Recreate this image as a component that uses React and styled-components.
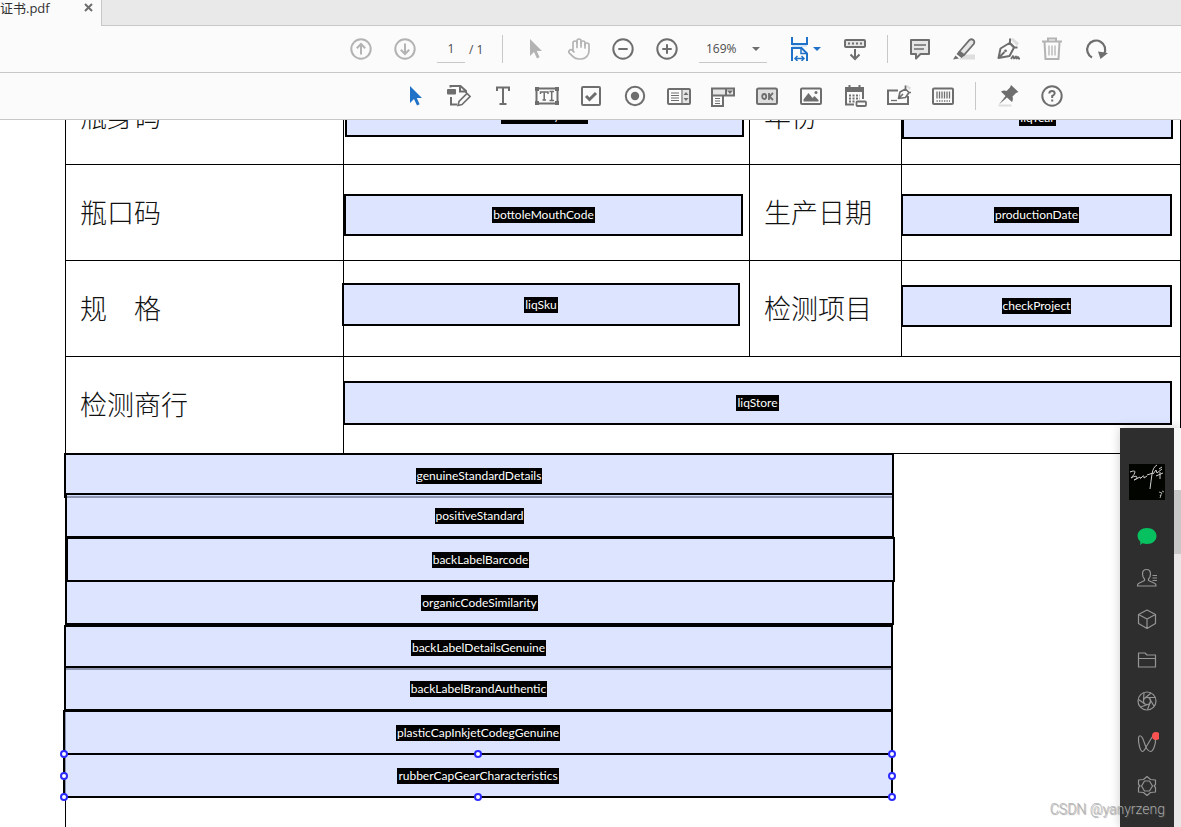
import React from 'react';
import styled, { createGlobalStyle, css } from 'styled-components';
import { Hand } from 'lucide-react';

const GlobalStyle = createGlobalStyle`
  * {
    box-sizing: border-box;
  }

  body {
    margin: 0;
    background: #fff;
    font-family: 'Open Sans', 'Noto Sans CJK SC', sans-serif;
  }

  button, input, select {
    margin: 0;
    padding: 0;
    border: 0;
    background: none;
    color: inherit;
    font: inherit;
  }
`;

const AppWindow = styled.div`
  display: flex;
  flex-direction: column;
  height: 100vh;
  overflow: hidden;
  position: relative;
`;

const TabBar = styled.div`
  display: flex;
  flex: none;
  height: 26px;
  background: #e9e9e9;
`;

const Tab = styled.div`
  display: flex;
  justify-content: space-between;
  width: 102px;
  padding-right: 8px;
  background: #fbfbfb;
  border-right: 1px solid #c8c8c8;
  color: #323232;
  font-size: 13px;
  line-height: 17px;
`;

const TabFiller = styled.div`
  flex: 1;
  border-bottom: 1px solid #c8c8c8;
`;

const CloseButton = styled.button`
  display: flex;
  align-items: center;
  height: 15px;
  color: #6e6e6e;
`;

const Toolbar = styled.div`
  display: flex;
  flex: none;
  align-items: center;
  height: 47px;
  padding-left: ${({ indent }) => indent}px;
  background: #fbfbfb;
  border-bottom: 1px solid #c8c8c8;
  color: #6e6e6e;
`;

const ToolButton = styled.button`
  display: flex;
  flex: none;
  align-items: center;
  justify-content: center;
  width: ${({ wide }) => (wide ? 56 : 44)}px;
  height: 44px;
  color: ${({ tone }) => ({ muted: '#b3b3b3', active: '#1f72c8' }[tone] || '#6e6e6e')};
`;

const Divider = styled.span`
  flex: none;
  width: 1px;
  height: 28px;
  margin: 0 10px;
  background: #c8c8c8;
`;

const PageInput = styled.input`
  width: 28px;
  height: 28px;
  margin: 0 4px 0 10px;
  border-bottom: 1px solid #c8c8c8;
  color: #4b4b4b;
  font-size: 12px;
  text-align: center;
`;

const PageCount = styled.span`
  width: 23px;
  color: #4b4b4b;
  font-size: 12px;
`;

const ZoomBox = styled.label`
  display: flex;
  align-items: center;
  width: 68px;
  height: 28px;
  margin: 0 10px;
  padding: 0 7px;
  border-bottom: 1px solid #c8c8c8;
`;

const ZoomSelect = styled.select`
  flex: 1;
  width: 40px;
  appearance: none;
  color: #4b4b4b;
  font-size: 12px;
`;

const Viewport = styled.main`
  flex: 1;
  min-height: 0;
  overflow: hidden;
`;

/* the page is scrolled, so its first row is cut by the toolbar */
const Page = styled.div`
  position: relative;
  margin-top: -51px;
  padding-left: 65px;
`;

const FormTable = styled.table`
  width: 100%;
  border-spacing: 0;
  border-right: 1px solid #000;
  table-layout: fixed;
`;

const Cell = styled.td`
  height: 96px;
  padding: 0;
  border-left: 1px solid #000;
  border-bottom: 1px solid #000;
`;

const Label = styled.th`
  height: ${({ tall }) => (tall ? 97 : 96)}px;
  padding: 0 14px 2px;
  border-left: 1px solid #000;
  border-bottom: 1px solid #000;
  color: #111;
  font-family: 'Noto Sans CJK SC', sans-serif;
  font-size: 27px;
  font-weight: 300;
  line-height: 40px;
  text-align: left;
  white-space: pre;
`;

const DetailsCell = styled.td`
  height: 420px;
  border-left: 1px solid #000;
`;

const FormField = styled.button`
  position: absolute;
  left: ${({ x }) => x}px;
  top: ${({ y }) => y}px;
  display: flex;
  align-items: center;
  justify-content: center;
  width: ${({ w }) => w}px;
  height: ${({ h }) => h}px;
  background: rgba(204, 216, 255, .69);
  border: 2px solid #000;
`;

const FieldName = styled.span`
  padding: 0 1px;
  background: #000;
  color: #fff;
  font-family: Lato, sans-serif;
  font-size: 12px;
  line-height: 16px;
`;

const handlePlaces = {
  start: '0%',
  middle: '50%',
  end: '100%',
};

const Selection = styled.span`
  position: absolute;
  inset: -1px;
`;

const Handle = styled.span`
  position: absolute;
  left: ${({ h }) => handlePlaces[h]};
  top: ${({ v }) => handlePlaces[v]};
  width: 8px;
  height: 8px;
  margin: -4px;
  background: #fff;
  border: 2px solid #2b2bff;
  border-radius: 50%;
`;

const Dock = styled.aside`
  position: absolute;
  top: 428px;
  right: 0;
  bottom: 0;
  display: flex;
  box-shadow: 0 0 10px rgba(0, 0, 0, .2);
`;

const DockMenu = styled.nav`
  display: flex;
  flex-direction: column;
  align-items: center;
  width: 54px;
  padding-top: 36px;
  background: #2e2e2e;
`;

const Avatar = styled.svg`
  flex: none;
  width: 36px;
  height: 36px;
  margin-bottom: 16px;
  background: #020400;
`;

const DockButton = styled.button`
  display: flex;
  flex: none;
  align-items: center;
  justify-content: center;
  width: 54px;
  height: ${({ tall }) => (tall ? 43 : 41)}px;
  color: #959595;
`;

const ScrollTrack = styled.div`
  width: 7px;
  padding-top: 62px;
  background: linear-gradient(#f8f8f8 62px, #e9e7e7 62px);
`;

const ScrollThumb = styled.div`
  height: 64px;
  background: #c8c8c8;
`;

const Watermark = styled.span`
  position: absolute;
  right: 16px;
  bottom: 8px;
  color: rgba(176, 176, 176, .95);
  font-family: Roboto, sans-serif;
  font-size: 14px;
  font-weight: 300;
  line-height: 20px;
  text-shadow: 1px 1px 1px rgba(90, 90, 90, .6);
`;

const iconBase = css`
  flex: none;
  fill: none;
  stroke: currentColor;
  stroke-width: 2;
`;

const Svg = styled.svg`
  ${iconBase}
`;

const ThinSvg = styled.svg`
  ${iconBase}
  stroke-width: 1.2;
  stroke-linejoin: round;
`;

const Icon = ({ children }) => (
  <Svg width="24" height="24" viewBox="0 0 24 24" aria-hidden="true">{children}</Svg>
);

const DockIcon = ({ children }) => (
  <ThinSvg width="24" height="24" viewBox="0 0 24 24" aria-hidden="true">{children}</ThinSvg>
);

const Caret = () => (
  <Svg width="8" height="4" viewBox="0 0 8 4" aria-hidden="true">
    <path d="M0 0h8L4 4z" fill="currentColor" stroke="none" />
  </Svg>
);

const PointerIcon = () => (
  <Icon><path d="M7 2v17l4-4 3 6.5 2.6-1.2-2.8-6.3H19z" fill="currentColor" stroke="none" /></Icon>
);

const mainTools = {
  up: <Icon><circle cx="12" cy="12" r="9.7" /><path d="M12 17.5V7.5M7.8 11.2 12 7l4.2 4.2" /></Icon>,
  down: <Icon><circle cx="12" cy="12" r="9.7" /><path d="M12 6.5v10M7.8 12.8 12 17l4.2-4.2" /></Icon>,
  minus: <Icon><circle cx="12" cy="12" r="9.7" /><path d="M7.3 12h9.4" /></Icon>,
  plus: <Icon><circle cx="12" cy="12" r="9.7" /><path d="M7.3 12h9.4M12 7.3v9.4" /></Icon>,
  fit: (
    <Icon>
      <path d="M3 8h15v2H3z" fill="#d3e5f6" stroke="none" />
      <path d="M3 0v7h15V0M3 24V11h9.500l5.500 5.500V24" />
      <path d="M12 11v5.500h6M6 21.500h9M8.500 19 6 21.500 8.500 24M12.500 19l2.500 2.500-2.500 2.500" strokeWidth="1.500" />
    </Icon>
  ),
  keyboard: (
    <Icon>
      <rect x="2" y="3" width="20" height="7" rx="1" fill="#e6e6e6" />
      <path d="M5 6.500h14" strokeDasharray="2 2" />
      <path d="M12 12v10M7.500 17.500 12 22l4.500-4.500" />
    </Icon>
  ),
  comment: (
    <Icon>
      <path d="M3 3h18v14h-8.500L8 21.500V17H3z" fill="#e6e6e6" strokeLinejoin="round" />
      <path d="M6 8h12M6 12h10" strokeWidth="1.300" />
    </Icon>
  ),
  highlight: (
    <Icon>
      <path d="M7 22.500h16v-5H12z" fill="#dedede" stroke="none" />
      <path d="M7.500 14.500 17.500 3q2-1.500 3.800 0t.4 4L12 18z" fill="#e6e6e6" strokeWidth="1.800" />
      <path d="M7 14l5.500 4.500-3 2.500-5-4zM3.500 18.500 7 21.500 1 22.500z" fill="currentColor" stroke="none" />
    </Icon>
  ),
  sign: (
    <Icon>
      <path d="M14 2 21 9l2-3-6-5z" fill="#dedede" stroke="none" />
      <path d="M2.500 21 4.500 11.500 13.500 6l4.500 4.500-4.500 8.500zM2.500 21l6-6M14 1.500V6l4.500 4.500h3" strokeWidth="2" strokeLinejoin="round" />
      <circle cx="9.500" cy="13.800" r="1.400" fill="currentColor" stroke="none" />
      <path d="M15 22l2-3 1 2.500 2-2 .5 2 1.500-1.500.5 1.500h1.500" strokeWidth="1.800" strokeLinejoin="round" />
    </Icon>
  ),
  trash: (
    <Icon>
      <path d="M2 4.500h20M8 4V1.500h8V4M4.500 5l1 17h13l1-17" />
      <path d="M9 8.500v10M12 8.500v10M15 8.500v10" strokeWidth="1.300" />
    </Icon>
  ),
  rotate: (
    <Icon>
      <path d="M8 20.500A9 9 0 1 1 20 17" strokeWidth="2.200" />
      <path d="M14 14.500l10 1.500-7.500 6z" fill="currentColor" stroke="none" />
    </Icon>
  ),
};

const formTools = [
  {
    name: 'Edit form',
    icon: (
      <Icon>
        <rect x="0" y="5" width="9" height="5.500" rx="1" fill="currentColor" stroke="none" />
        <path d="M3.500 3.500V2h10l5.500 5v2M13 2v5.500h5M4 13v7.500h6" />
        <path d="M11 21.500l1-4 8-8 3 3-8 8z" strokeWidth="1.600" />
      </Icon>
    ),
  },
  {
    name: 'Add text',
    icon: <Icon><path d="M6 7V3.500h12V7M12 3.500v16M8.500 20h7" /></Icon>,
  },
  {
    name: 'Text field',
    icon: (
      <Icon>
        <rect x="1.500" y="4.500" width="21" height="15" />
        <path d="M0 3h4v4H0zM20 3h4v4h-4zM0 17h4v4H0zM20 17h4v4h-4z" fill="currentColor" stroke="none" />
        <path d="M5.500 10V8h7.500v2M9.200 8v8M7.500 16h3.500M14.500 7.500h4.500M16.700 7.500v9M14.500 16.500h4.500" strokeWidth="1.500" />
      </Icon>
    ),
  },
  {
    name: 'Check box',
    icon: (
      <Icon>
        <rect x="3" y="3" width="18" height="18" rx="1" />
        <path d="M7 12l3.500 3.500L17 9" strokeWidth="3" />
      </Icon>
    ),
  },
  {
    name: 'Radio button',
    icon: <Icon><circle cx="12" cy="12" r="9.200" /><circle cx="12" cy="12" r="4.200" fill="currentColor" stroke="none" /></Icon>,
  },
  {
    name: 'List box',
    icon: (
      <Icon>
        <rect x="1" y="5" width="22" height="15" rx="1" />
        <path d="M16 6h6v13h-6z" fill="#e6e6e6" stroke="none" />
        <path d="M15 5v15M4 9h8M4 11.500h8M4 14h8M4 16.500h8" strokeWidth="1.200" />
        <path d="M16.500 11h5L19 8zM16.500 14h5L19 17z" fill="currentColor" stroke="none" />
      </Icon>
    ),
  },
  {
    name: 'Dropdown',
    icon: (
      <Icon>
        <path d="M1 4.500h22v7H1z" fill="#e6e6e6" />
        <path d="M1 11.500V22h11V11.500M15 4.500v7" />
        <path d="M4 14.500h5M4 17h5M4 19.500h5" strokeWidth="1.200" />
        <path d="M16 6.500h6L19 10z" fill="currentColor" stroke="none" />
      </Icon>
    ),
  },
  {
    name: 'Button',
    icon: (
      <Icon>
        <rect x="2" y="4.500" width="20" height="15.500" rx="1.500" fill="#dedede" />
        <ellipse cx="9.200" cy="12.500" rx="2" ry="2.500" strokeWidth="1.800" />
        <path d="M14 9v7M18 9l-3.500 3.500L18 16" strokeWidth="1.800" />
      </Icon>
    ),
  },
  {
    name: 'Image field',
    icon: (
      <Icon>
        <rect x="2" y="4.500" width="20" height="15.500" rx="1" />
        <path d="M4.500 17.500v-2L9.500 9l4 5 2-2 4 4v1.500z" fill="currentColor" stroke="none" />
        <circle cx="17" cy="8.500" r="1.500" fill="currentColor" stroke="none" />
      </Icon>
    ),
  },
  {
    name: 'Date field',
    icon: (
      <Icon>
        <path d="M11 20.500H3V4h17v11" />
        <path d="M2 3h19v5H2z" fill="currentColor" stroke="none" />
        <path d="M6.500 1v4M16.500 1v4" />
        <path d="M6 11.500h11M6 14.500h11M6 17.500h7" strokeDasharray="2 1.500" />
        <rect x="13.500" y="17.500" width="9.500" height="4.500" rx="1" fill="#fbfbfb" strokeWidth="1.800" />
      </Icon>
    ),
  },
  {
    name: 'Signature field',
    icon: (
      <Icon>
        <path d="M11 6.500H1V20h20v-8" />
        <path d="M4 16.500h6" strokeWidth="1.300" />
        <path d="M18 2.500 23 6l1-2.500L20 1z" fill="#dedede" stroke="none" />
        <path d="M11.500 14.500 13 8l5.500-3L22 8.500l-3.500 5zM11.500 14.500l4.500-4.500M18.500 1.500V5L22 8.500h2" strokeWidth="1.700" strokeLinejoin="round" />
      </Icon>
    ),
  },
  {
    name: 'Barcode',
    icon: (
      <Icon>
        <rect x="2" y="4.500" width="20" height="15.500" rx="1" />
        <path d="M6 7.500v7M8.500 7.500v7M11 7.500v7M13.500 7.500v7M16 7.500v7M18.500 7.500v7" strokeWidth="1.300" />
        <path d="M5.500 17h13.500" strokeWidth="1.500" strokeDasharray="1.300 1.200" />
      </Icon>
    ),
  },
];

const contents = [
  { label: '瓶身码', second: '年份' },
  { label: '瓶口码', second: '生产日期' },
  { label: '规　格', second: '检测项目' },
];

/* coordinates are measured from the top left corner of the page */
const fields = [
  { name: 'bottleBodyCode', x: 345, y: 26, w: 399, h: 42 },
  { name: 'liqYear', x: 902, y: 28, w: 271, h: 42 },
  { name: 'bottoleMouthCode', x: 344, y: 125, w: 399, h: 42 },
  { name: 'productionDate', x: 901, y: 125, w: 271, h: 42 },
  { name: 'liqSku', x: 342, y: 214, w: 398, h: 43 },
  { name: 'checkProject', x: 901, y: 216, w: 271, h: 42 },
  { name: 'liqStore', x: 343, y: 312, w: 829, h: 44 },
  { name: 'genuineStandardDetails', x: 64, y: 384, w: 830, h: 45 },
  { name: 'positiveStandard', x: 65, y: 424, w: 829, h: 45 },
  { name: 'backLabelBarcode', x: 66, y: 468, w: 829, h: 45 },
  { name: 'organicCodeSimilarity', x: 65, y: 511, w: 829, h: 45 },
  { name: 'backLabelDetailsGenuine', x: 64, y: 556, w: 829, h: 45 },
  { name: 'backLabelBrandAuthentic', x: 64, y: 597, w: 829, h: 45 },
  { name: 'plasticCapInkjetCodegGenuine', x: 63, y: 641, w: 830, h: 45 },
  { name: 'rubberCapGearCharacteristics', x: 63, y: 684, w: 830, h: 45, selected: true },
];

const handles = [
  ['start', 'start'], ['middle', 'start'], ['end', 'start'],
  ['start', 'middle'], ['end', 'middle'],
  ['start', 'end'], ['middle', 'end'], ['end', 'end'],
];

const dockItems = [
  {
    name: 'Chats',
    icon: (
      <DockIcon>
        <path d="M12 3c5.500 0 9.500 3.500 9.500 8s-4 8-9.500 8q-2.500 0-4.500-.8L5 20l.5-3Q2.500 14.500 2.500 11C2.500 6.500 6.500 3 12 3z" fill="#07c160" stroke="none" />
      </DockIcon>
    ),
  },
  {
    name: 'Contacts',
    icon: (
      <DockIcon>
        <path d="M11.500 3.500q4 0 4 4.500 0 3-2 5v1.500l6.500 3q1 .5 1 2.500H2.500q0-2 1-2.500l6-3V13q-2-2-2-5 0-4.500 4-4.500zM17.500 9.500H22M17.500 12H22M17.500 14.500H22" />
      </DockIcon>
    ),
  },
  {
    name: 'Favorites',
    icon: <DockIcon><path d="M12 3l8.500 4.500v9L12 21.500l-8.500-5v-9zM3.500 7.500 12 12l8.500-4.500M12 12v9.500" /></DockIcon>,
  },
  {
    name: 'Files',
    icon: <DockIcon><path d="M3.500 19V5H10l2 2h8.500v12zM3.500 10.500h17" /></DockIcon>,
  },
  {
    name: 'Moments',
    icon: (
      <DockIcon>
        <circle cx="12" cy="12" r="9" />
        <circle cx="12" cy="12" r="3.500" />
        <path d="M12 8.500h8M14.500 9.500l4.500 7.500M15.500 12.500l-3 8M13.500 15.200 5.500 18M10 15 3.500 10.500M8.500 11.500 9 3.500M10 9l6-5" />
      </DockIcon>
    ),
  },
  {
    name: 'Channels',
    tall: true,
    icon: (
      <DockIcon>
        <path d="M12 14.500C10 18 9 20.500 7.500 20.500c-2 0-4.500-8-4-13.500.3-3 2.500-3 4 0C9 10 10.500 16 12 18q2 2.500 3.500 2.500c2.500 0 5.500-7 5-13-.3-3.500-2.500-3.500-4-.5z" />
        <circle cx="21" cy="5" r="4" fill="#fa5151" stroke="none" />
      </DockIcon>
    ),
  },
  {
    name: 'Search',
    tall: true,
    icon: (
      <DockIcon>
        <path d="M12 2.500l3.500 3 5 .5v4.500L19 12l1.500 1.500V18l-5 .5-3.500 3-3.500-3-5-.5v-4.500L5 12l-1.500-1.500V6l5-.5zM9.500 7h5l3 5-3 5h-5l-3-5z" />
      </DockIcon>
    ),
  },
];

const Tool = ({ name, tone, wide, children }) => (
  <ToolButton type="button" aria-label={name} tone={tone} wide={wide}>{children}</ToolButton>
);

const MainToolbar = () => (
  <Toolbar indent={339}>
    <Tool name="Previous page" tone="muted">{mainTools.up}</Tool>
    <Tool name="Next page" tone="muted">{mainTools.down}</Tool>
    <PageInput aria-label="Page number" defaultValue="1" />
    <PageCount>/ 1</PageCount>
    <Divider />
    <Tool name="Select" tone="muted"><PointerIcon /></Tool>
    <Tool name="Pan" tone="muted"><Hand size={24} strokeWidth={1.7} /></Tool>
    <Tool name="Zoom out">{mainTools.minus}</Tool>
    <Tool name="Zoom in">{mainTools.plus}</Tool>
    <ZoomBox>
      <ZoomSelect aria-label="Zoom level" defaultValue="169">
        <option value="100">100%</option>
        <option value="169">169%</option>
      </ZoomSelect>
      <Caret />
    </ZoomBox>
    <Tool name="Fit width" tone="active" wide>
      {mainTools.fit}
      <Caret />
    </Tool>
    <Tool name="Show toolbar below">{mainTools.keyboard}</Tool>
    <Divider />
    <Tool name="Comment">{mainTools.comment}</Tool>
    <Tool name="Highlight">{mainTools.highlight}</Tool>
    <Tool name="Sign">{mainTools.sign}</Tool>
    <Tool name="Delete" tone="muted">{mainTools.trash}</Tool>
    <Tool name="Rotate">{mainTools.rotate}</Tool>
  </Toolbar>
);

const FormToolbar = () => (
  <Toolbar indent={393}>
    <Tool name="Select object" tone="active"><PointerIcon /></Tool>
    {formTools.map(({ name, icon }) => (
      <Tool key={name} name={name}>{icon}</Tool>
    ))}
    <Divider />
    <Tool name="Pin">
      <Icon>
        <path d="M2.500 20.500h13v2h-13z" fill="#dedede" stroke="none" />
        <path d="M15 1l7.500 7-2.500 1-3.500 3.500q1 3-.5 5.500l-5-4.500-8 7 6.500-8.500L5 7.500q3-1.500 5.500-.5L14 3.500z" fill="currentColor" stroke="none" />
      </Icon>
    </Tool>
    <Tool name="Help">
      <Icon>
        <circle cx="12" cy="12" r="9.700" />
        <path d="M9.200 9.500Q9.500 7 12 7t2.700 2.300Q14.700 11 12.200 12v2M12.200 15.500v2" />
      </Icon>
    </Tool>
  </Toolbar>
);

const FormPage = () => (
  <Page>
    <FormTable>
      <colgroup>
        <col width="278" />
        <col width="406" />
        <col width="152" />
        <col />
      </colgroup>
      <tbody>
        {contents.map(({ label, second }) => (
          <tr key={label}>
            <Label scope="row">{label}</Label>
            <Cell />
            <Label scope="row">{second}</Label>
            <Cell />
          </tr>
        ))}
        <tr>
          <Label scope="row" tall>检测商行</Label>
          <Cell colSpan={3} />
        </tr>
        <tr>
          <DetailsCell colSpan={4} />
        </tr>
      </tbody>
    </FormTable>
    {fields.map(({ name, selected, ...place }) => (
      <FormField key={name} type="button" {...place}>
        <FieldName>{name}</FieldName>
        {selected && (
          <Selection>
            {handles.map(([h, v]) => <Handle key={h + v} h={h} v={v} />)}
          </Selection>
        )}
      </FormField>
    ))}
  </Page>
);

const ChatDock = () => (
  <Dock>
    <DockMenu>
      <Avatar viewBox="0 0 36 36" fill="none" stroke="#cfcfcf" aria-hidden="true">
        <path d="M1 8q5-2 5 0t-4 6q5-3 6-1t-3 3l6-3q0 3 2 0t2 1l3-2M18 11l6-2M28 1q-4 2-5 9t-2 15M24 10l3-4 1 3 5-4M27 12l7-3M31 8v7M30 5l3-2" />
        <path d="M30 28l3 1-2 3M33 27l2 1M32 31l-1 3" strokeWidth="0.800" />
      </Avatar>
      {dockItems.map(({ name, icon, tall }) => (
        <DockButton key={name} type="button" aria-label={name} tall={tall}>{icon}</DockButton>
      ))}
    </DockMenu>
    <ScrollTrack>
      <ScrollThumb />
    </ScrollTrack>
  </Dock>
);

const App = () => (
  <AppWindow>
    <GlobalStyle />
    <TabBar>
      <Tab>
        证书.pdf
        <CloseButton type="button" aria-label="Close tab">
          <Svg width="9" height="9" viewBox="0 0 9 9"><path d="M1 1l7 7M8 1 1 8" /></Svg>
        </CloseButton>
      </Tab>
      <TabFiller />
    </TabBar>
    <MainToolbar />
    <FormToolbar />
    <Viewport>
      <FormPage />
    </Viewport>
    <ChatDock />
    <Watermark>CSDN @yanyrzeng</Watermark>
  </AppWindow>
);

export default App;
